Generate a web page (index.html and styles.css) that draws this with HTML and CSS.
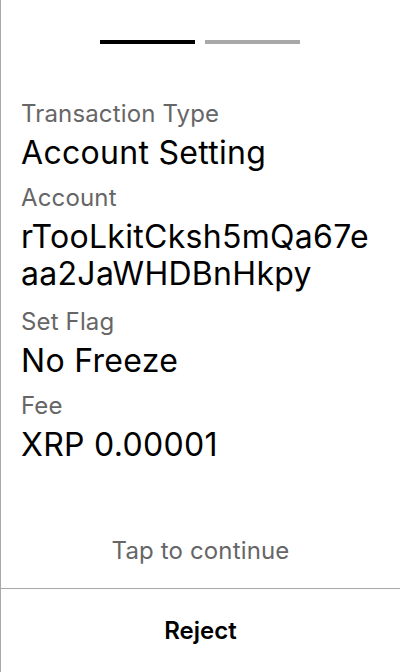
FILE: index.html
```html
<!DOCTYPE html>
<html lang="en">
<head>
<meta charset="utf-8">
<title>Account Setting</title>
<link rel="stylesheet" href="styles.css">
</head>
<body>
<div class="screen">
  <div class="progress">
    <span class="bar bar-active"></span>
    <span class="bar"></span>
  </div>
  <div class="fields">
    <div class="field">
      <div class="label">Transaction Type</div>
      <div class="value">Account Setting</div>
    </div>
    <div class="field field-account">
      <div class="label">Account</div>
      <div class="value value-wrap">rTooLkitCksh5mQa67eaa2JaWHDBnHkpy</div>
    </div>
    <div class="field">
      <div class="label">Set Flag</div>
      <div class="value">No Freeze</div>
    </div>
    <div class="field">
      <div class="label">Fee</div>
      <div class="value">XRP 0.00001</div>
    </div>
  </div>
  <div class="tap">Tap to continue</div>
  <div class="footer">
    <button class="reject">Reject</button>
  </div>
</div>
</body>
</html>
```

FILE: styles.css
```css
* { box-sizing: border-box; }
html, body { margin: 0; padding: 0; background: #fff; }
body { font-family: Inter, "Noto Sans", sans-serif; color: #000; }

.screen {
  width: 400px;
  height: 672px;
  border-left: 1px solid #a8a8a8;
  display: flex;
  flex-direction: column;
}

.progress {
  display: flex;
  justify-content: center;
  gap: 10px;
  padding-top: 40px;
  padding-right: 1px;
}
.bar {
  width: 95px;
  height: 4px;
  background: #a8a8a8;
}
.bar-active { background: #000; }

.fields {
  flex: 1;
  padding: 0 19px 0 20px;
  margin-top: 55px;
  display: flex;
  flex-direction: column;
  gap: 12px;
}
.field {
  display: flex;
  flex-direction: column;
  gap: 6px;
}
.field-account { margin-bottom: 3px; }
.label {
  font-size: 24px;
  line-height: 29px;
  color: #666;
  letter-spacing: 0.15px;
}
.value {
  font-size: 32px;
  line-height: 37px;
  color: #000;
  letter-spacing: 0.3px;
}
.value-wrap { word-break: break-all; }

.tap {
  text-align: center;
  font-size: 24px;
  line-height: 29px;
  color: #666;
  letter-spacing: 0.15px;
  padding-bottom: 23px;
}

.footer {
  height: 84px;
  border-top: 1px solid #a8a8a8;
  display: flex;
  align-items: center;
  justify-content: center;
}
.reject {
  font-family: Inter, "Noto Sans", sans-serif;
  font-size: 24px;
  line-height: 29px;
  font-weight: 600;
  color: #000;
  background: none;
  border: none;
  padding: 0;
}
```
